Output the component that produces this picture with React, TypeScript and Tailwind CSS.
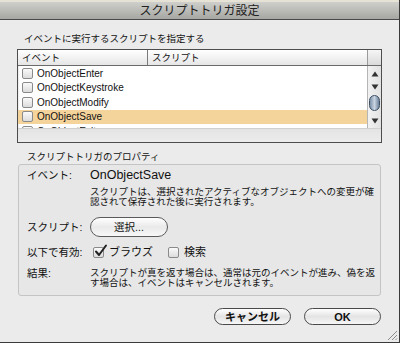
const rows = ["OnObjectEnter", "OnObjectKeystroke", "OnObjectModify", "OnObjectSave", "OnObjectExit"];

function Tri({ down }: { down?: boolean }) {
  return (
    <svg width="8" height="6" viewBox="0 0 8 6" className="block">
      {down ? <path d="M0.5 0.5 H7.5 L4 5.5 Z" fill="#333" /> : <path d="M0.5 5.5 H7.5 L4 0.5 Z" fill="#333" />}
    </svg>
  );
}

function Box({ checked }: { checked?: boolean }) {
  return (
    <div className="relative w-[11px] h-[11px] border border-[#8a8a8a] rounded-[2px] bg-gradient-to-b from-[#fafafa] to-[#dcdcdc] shrink-0">
      {checked && (
        <svg width="14" height="14" viewBox="0 0 14 14" className="absolute -top-[4px] left-[0px]">
          <path d="M2 7.5 L5 11 L12 1.5" fill="none" stroke="#222" strokeWidth="2" strokeLinecap="round" strokeLinejoin="round" />
        </svg>
      )}
    </div>
  );
}

export default function App() {
  return (
    <div
      className="relative w-[400px] h-[343px] overflow-hidden bg-[#ebebeb] border-b border-r border-[#3a3a3a] text-[#111]"
      style={{ fontFamily: "'Liberation Sans', 'Noto Sans CJK JP', sans-serif" }}
    >
      {/* title bar */}
      <div className="h-[20px] border-t-2 border-t-[#e6e2d6] border-b border-b-[#4a4a4a] bg-gradient-to-b from-[#cfcfcc] to-[#a6a6a3] flex items-center justify-center">
        <span className="text-[12px] leading-[14px] text-[#222]">スクリプトトリガ設定</span>
      </div>

      <div className="px-[17px]">
        <div className="mt-[13px] h-[12px] leading-[12px] text-[9.5px] pl-[7px]">イベントに実行するスクリプトを指定する</div>

        {/* list box */}
        <div className="mt-[4px] h-[94px] border border-[#4d4d4d] bg-white flex flex-col shadow-[inset_0_1px_2px_rgba(0,0,0,0.25)]">
          <div className="h-[16px] shrink-0 flex border-b border-[#6b6b6b] bg-gradient-to-b from-[#ffffff] to-[#e6e6e6] text-[9.5px] leading-[15px]">
            <div className="w-[130px] border-r border-[#7a7a7a] pl-[4px]">イベント</div>
            <div className="flex-1 pl-[4px]">スクリプト</div>
            <div className="w-[14px] border-l border-[#9a9a9a] bg-gradient-to-b from-[#f6f6f6] to-[#dadada]" />
          </div>
          <div className="h-[62px] shrink-0 flex">
            <div className="flex-1 overflow-hidden">
              {rows.map((r) => (
                <div
                  key={r}
                  className={`h-[14.5px] flex items-center pl-[4px] gap-[4px] text-[10px] ${r === "OnObjectSave" ? "bg-[#f5d49c]" : ""}`}
                >
                  <Box />
                  <span className="leading-[13px]">{r}</span>
                </div>
              ))}
            </div>
            <div className="w-[14px] border-l border-[#b5b5b5] bg-gradient-to-r from-[#f2f2f2] to-[#e2e2e2] flex flex-col items-center">
              <div className="mt-[5px]"><Tri /></div>
              <div className="mt-[7px]"><Tri down /></div>
              <div className="mt-[5px] w-[11px] h-[16px] rounded-[6px] border border-[#3d5066] bg-gradient-to-r from-[#7f93aa] via-[#c9d5e2] to-[#6e829a]" />
              <div className="mt-[7px]"><Tri down /></div>
            </div>
          </div>
          <div className="flex-1 border-t border-[#d0d0d0] bg-gradient-to-b from-[#e4e4e4] to-[#ececec]" />
        </div>

        <div className="mt-[8px] h-[12px] leading-[12px] text-[9.5px] pl-[10px]">スクリプトトリガのプロパティ</div>

        {/* group box */}
        <div className="mt-[1px] mx-[1px] h-[132px] border border-[#c4c4c4] rounded-[3px] bg-[#e7e7e7] pl-[8px] pr-[4px] text-[10.5px]">
          <div className="mt-[3px] flex">
            <div className="w-[63px] h-[14px] leading-[14px]">イベント:</div>
            <div className="flex-1">
              <div className="h-[14px] leading-[14px] text-[12.5px]">OnObjectSave</div>
              <div className="mt-[5px] text-[9.5px] leading-[10px] whitespace-nowrap">
                スクリプトは、選択されたアクティブなオブジェクトへの変更が確
                <br />
                認されて保存された後に実行されます。
              </div>
            </div>
          </div>
          <div className="mt-[10px] flex items-center h-[20px]">
            <div className="w-[63px] leading-[14px]">スクリプト:</div>
            <div className="w-[78px] h-[20px] rounded-full border border-[#5a5a5a] bg-gradient-to-b from-[#ffffff] via-[#e9e9e9] to-[#f8f8f8] flex items-center justify-center text-[10.5px] leading-[14px]">
              選択...
            </div>
          </div>
          <div className="mt-[8px] flex items-center h-[14px]">
            <div className="w-[66px] leading-[14px]">以下で有効:</div>
            <Box checked />
            <span className="ml-[5px] text-[11px] leading-[14px]">ブラウズ</span>
            <div className="ml-[15px]"><Box /></div>
            <span className="ml-[5px] text-[11px] leading-[14px]">検索</span>
          </div>
          <div className="mt-[9px] flex">
            <div className="w-[63px] leading-[10px]">結果:</div>
            <div className="flex-1 text-[9.5px] leading-[10px] whitespace-nowrap">
              スクリプトが真を返す場合は、通常は元のイベントが進み、偽を返
              <br />
              す場合は、イベントはキャンセルされます。
            </div>
          </div>
        </div>

        {/* buttons */}
        <div className="mt-[12px] mr-[1px] flex justify-end gap-[13px]">
          <div className="w-[77px] h-[17px] rounded-full border border-[#4a4a4a] bg-gradient-to-b from-[#ffffff] via-[#e4e4e4] to-[#f6f6f6] flex items-center justify-center text-[11px] font-bold leading-[14px]">
            キャンセル
          </div>
          <div className="w-[77px] h-[17px] rounded-full border border-[#4a4a4a] bg-gradient-to-b from-[#ffffff] via-[#e4e4e4] to-[#f6f6f6] flex items-center justify-center text-[11px] font-bold leading-[14px]">
            OK
          </div>
        </div>
      </div>

      {/* resize grip */}
      <svg width="12" height="12" viewBox="0 0 12 12" className="absolute right-[1px] bottom-[1px]">
        <path d="M11 2 L2 11 M11 6 L6 11 M11 9.5 L9.5 11" stroke="#8c8c8c" strokeWidth="1" />
      </svg>
    </div>
  );
}
